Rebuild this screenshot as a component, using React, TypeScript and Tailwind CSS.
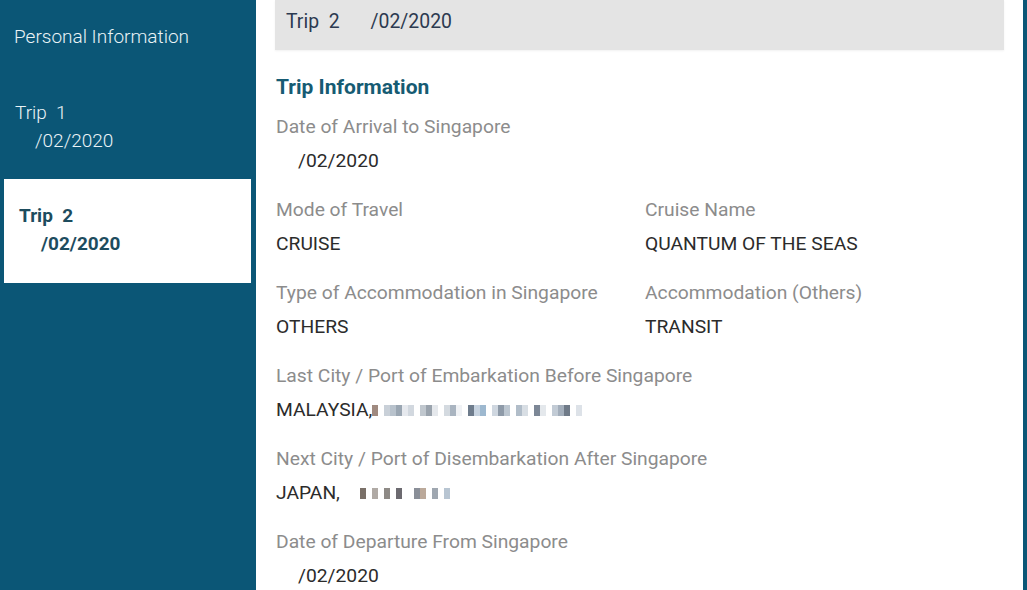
import React from "react";

const font = { fontFamily: "Roboto, 'Noto Sans', Arial, sans-serif" };

function Field({ label, children }: { label: string; children: React.ReactNode }) {
  return (
    <div className="flex flex-col">
      <div className="text-[19.25px] leading-[24px] text-[#8c8c8c]">{label}</div>
      <div className="mt-[10px] text-[19.25px] leading-[24px] text-[#2b2b2b] flex items-center">{children}</div>
    </div>
  );
}

function Pix({ cells }: { cells: string[] }) {
  return (
    <span className="inline-flex items-center h-[12px]">
      {cells.map((c, i) => (
        <span key={i} className="inline-block h-[11px] w-[6px]" style={{ backgroundColor: c }} />
      ))}
    </span>
  );
}

export default function App() {
  const malaysiaPix = [
    "#a08a80", "#fff", "#c9d0d8", "#b8c2cc", "#9aa6b2", "#e6e9ee", "#d2d8df", "#fff", "#c0c7ce", "#9aa3ad",
    "#e5e8ec", "#fff", "#d4dae0", "#a9b4c0", "#f0f2f5", "#fff", "#6e7c8c", "#c7d3e0", "#9db8cf", "#fff",
    "#cfd7e0", "#8e9aa8", "#bcc6d0", "#fff", "#b1bdc9", "#d8dee4", "#fff", "#7c8796", "#e4e8ec", "#fff",
    "#c2cbd5", "#a3aebb", "#6f7a88", "#fff", "#dde2e8",
  ];
  const japanPix = [
    "#fff", "#7a7068", "#fff", "#b0aaa5", "#fff", "#8e8a86", "#fff", "#6c6a70", "#fff", "#fff", "#8a8f98",
    "#bba99a", "#fff", "#9fa7b0", "#fff", "#b8c5d2", "#fff",
  ];
  return (
    <div className="flex w-[1027px] h-[590px] overflow-hidden bg-[#0b5676]" style={font}>
      <aside className="w-[256px] shrink-0 flex flex-col pt-[23px]">
        <div className="pl-[14px] text-[19px] leading-[28px] font-light text-[#eaf3f6]">Personal Information</div>
        <div className="mt-[48px] pl-[15px] text-[19px] leading-[28px] font-light text-[#eaf3f6]">
          <div>Trip&nbsp; 1</div>
          <div className="pl-[20px]">/02/2020</div>
        </div>
        <div className="mt-[24px] ml-[4px] w-[247px] h-[104px] bg-white pt-[23px] pl-[15px] text-[19px] leading-[28px] font-bold text-[#1d4c5e]">
          <div>Trip&nbsp; 2</div>
          <div className="pl-[22px]">/02/2020</div>
        </div>
      </aside>
      <main className="w-[767px] shrink-0 bg-white pl-[19px] flex flex-col">
        <div className="w-[729px] h-[50px] bg-[#e4e4e4] shadow-[0_1px_2px_rgba(0,0,0,0.06)] flex items-center pl-[11px] pb-[6px] text-[19.4px] text-[#2c3a50]">
          <span>Trip&nbsp; 2</span>
          <span className="ml-[31px]">/02/2020</span>
        </div>
        <div className="pl-[1px]">
          <h2 className="mt-[23px] text-[21px] leading-[28px] font-bold text-[#165b73]">Trip Information</h2>
          <div className="mt-[14px] grid grid-cols-[369px_1fr] gap-y-[25px]">
            <div className="col-span-2">
              <Field label="Date of Arrival to Singapore">
                <span className="pl-[22px]">/02/2020</span>
              </Field>
            </div>
            <Field label="Mode of Travel">CRUISE</Field>
            <Field label="Cruise Name">QUANTUM OF THE SEAS</Field>
            <Field label="Type of Accommodation in Singapore">OTHERS</Field>
            <Field label="Accommodation (Others)">TRANSIT</Field>
            <div className="col-span-2">
              <Field label="Last City / Port of Embarkation Before Singapore">
                <span>MALAYSIA,</span>
                <Pix cells={malaysiaPix} />
              </Field>
            </div>
            <div className="col-span-2">
              <Field label="Next City / Port of Disembarkation After Singapore">
                <span>JAPAN,</span>
                <span className="ml-[14px] flex">
                  <Pix cells={japanPix} />
                </span>
              </Field>
            </div>
            <div className="col-span-2">
              <Field label="Date of Departure From Singapore">
                <span className="pl-[22px]">/02/2020</span>
              </Field>
            </div>
          </div>
        </div>
      </main>
    </div>
  );
}
